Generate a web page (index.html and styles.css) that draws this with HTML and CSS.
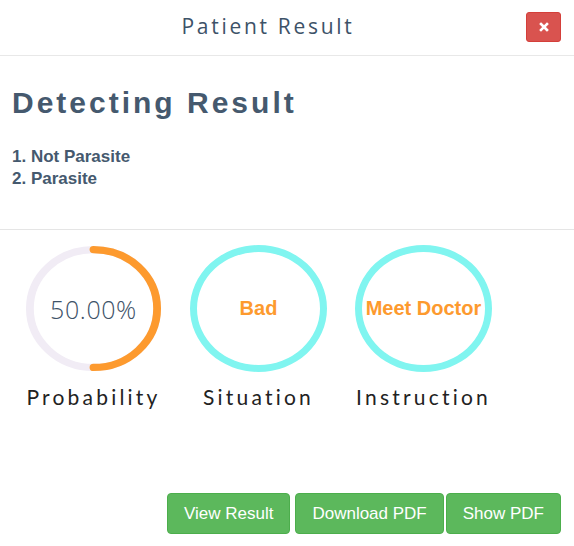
FILE: index.html
```html
<!DOCTYPE html>
<html>
<head>
<meta charset="utf-8">
<link rel="stylesheet" href="styles.css">
</head>
<body>
<div class="modal">
  <div class="modal-header">
    <h4 class="modal-title">Patient Result</h4>
    <button class="close-btn" aria-label="Close">
      <svg width="10" height="10" viewBox="0 0 10 10"><path d="M2 2 L8 8 M8 2 L2 8" stroke="#fff" stroke-width="2.6" stroke-linecap="square"/></svg>
    </button>
  </div>
  <div class="section">
    <h2 class="heading">Detecting Result</h2>
    <ol class="classes">
      <li>1. Not Parasite</li>
      <li>2. Parasite</li>
    </ol>
  </div>
  <div class="stats">
    <div class="stat">
      <div class="ring">
        <svg width="137" height="127" viewBox="0 0 140 140" preserveAspectRatio="none">
          <circle cx="70" cy="70" r="65" fill="none" stroke="#f1ecf5" stroke-width="8"/>
          <path d="M70 5 A65 65 0 0 1 70 135" fill="none" stroke="#fd9a2e" stroke-width="8" stroke-linecap="round"/>
        </svg>
        <span class="ring-value">50.00%</span>
      </div>
      <div class="label">Probability</div>
    </div>
    <div class="stat">
      <div class="ring ring-cyan">
        <span class="ring-text">Bad</span>
      </div>
      <div class="label">Situation</div>
    </div>
    <div class="stat">
      <div class="ring ring-cyan">
        <span class="ring-text">Meet Doctor</span>
      </div>
      <div class="label">Instruction</div>
    </div>
  </div>
  <div class="footer">
    <button class="btn">View Result</button>
    <button class="btn">Download PDF</button>
    <button class="btn btn-last">Show PDF</button>
  </div>
</div>
</body>
</html>
```
FILE: styles.css
```css
html, body {
  margin: 0;
  padding: 0;
  background: #fff;
}
.modal {
  width: 574px;
  height: 546px;
  display: flex;
  flex-direction: column;
  font-family: "Liberation Sans", Arial, sans-serif;
}
.modal-header {
  height: 56px;
  box-sizing: border-box;
  border-bottom: 1px solid #e8e8e8;
  display: flex;
  align-items: center;
  justify-content: center;
  padding-right: 38px;
  position: relative;
}
.modal-title {
  margin: 0;
  font-family: "Open Sans", sans-serif;
  font-weight: 400;
  font-size: 21px;
  letter-spacing: 2.7px;
  color: #3d5268;
  margin-top: -3px;
}
.close-btn {
  position: absolute;
  right: 13px;
  top: 12px;
  width: 35px;
  height: 30px;
  border: 1px solid #d43f3a;
  border-radius: 3px;
  background: #d9534f;
  padding: 0;
  display: flex;
  align-items: center;
  justify-content: center;
}
.section {
  padding: 0 12px;
  height: 173px;
  border-bottom: 1px solid #e5e5e5;
}
.heading {
  margin: 29px 0 0;
  font-size: 30px;
  font-weight: 700;
  letter-spacing: 3px;
  color: #45596e;
  line-height: 36px;
}
.classes {
  list-style: none;
  margin: 25px 0 0;
  padding: 0;
  font-size: 17px;
  font-weight: 700;
  color: #45596e;
  line-height: 22px;
}
.stats {
  display: flex;
  gap: 28px;
  padding: 15px 0 0 25px;
}
.stat {
  width: 137px;
  display: flex;
  flex-direction: column;
  align-items: center;
}
.ring {
  width: 137px;
  height: 127px;
  position: relative;
  display: flex;
  align-items: center;
  justify-content: center;
}
.ring svg {
  position: absolute;
  left: 0;
  top: 0;
}
.ring-cyan {
  box-sizing: border-box;
  border: 7px solid #80f5f0;
  border-radius: 50%;
}
.ring-value {
  position: relative;
  font-family: "Open Sans", sans-serif;
  font-weight: 300;
  font-size: 25px;
  letter-spacing: 0.6px;
  color: #3d5268;
}
.ring-text {
  font-size: 20px;
  font-weight: 700;
  color: #fd9a2e;
  white-space: nowrap;
}
.label {
  margin-top: 12px;
  font-family: "Lato", sans-serif;
  font-weight: 400;
  font-size: 21px;
  letter-spacing: 3.2px;
  color: #222;
  white-space: nowrap;
}
.footer {
  margin-top: auto;
  display: flex;
  justify-content: flex-end;
  padding: 0 13px 12px 0;
  gap: 5px;
}
.btn {
  height: 41px;
  padding: 0 16px;
  border: 1px solid #4cae4c;
  border-radius: 4px;
  background: #5cb85c;
  color: #fff;
  font-family: "Liberation Sans", Arial, sans-serif;
  font-size: 17px;
}
.btn-last {
  margin-left: -3px;
}
```
